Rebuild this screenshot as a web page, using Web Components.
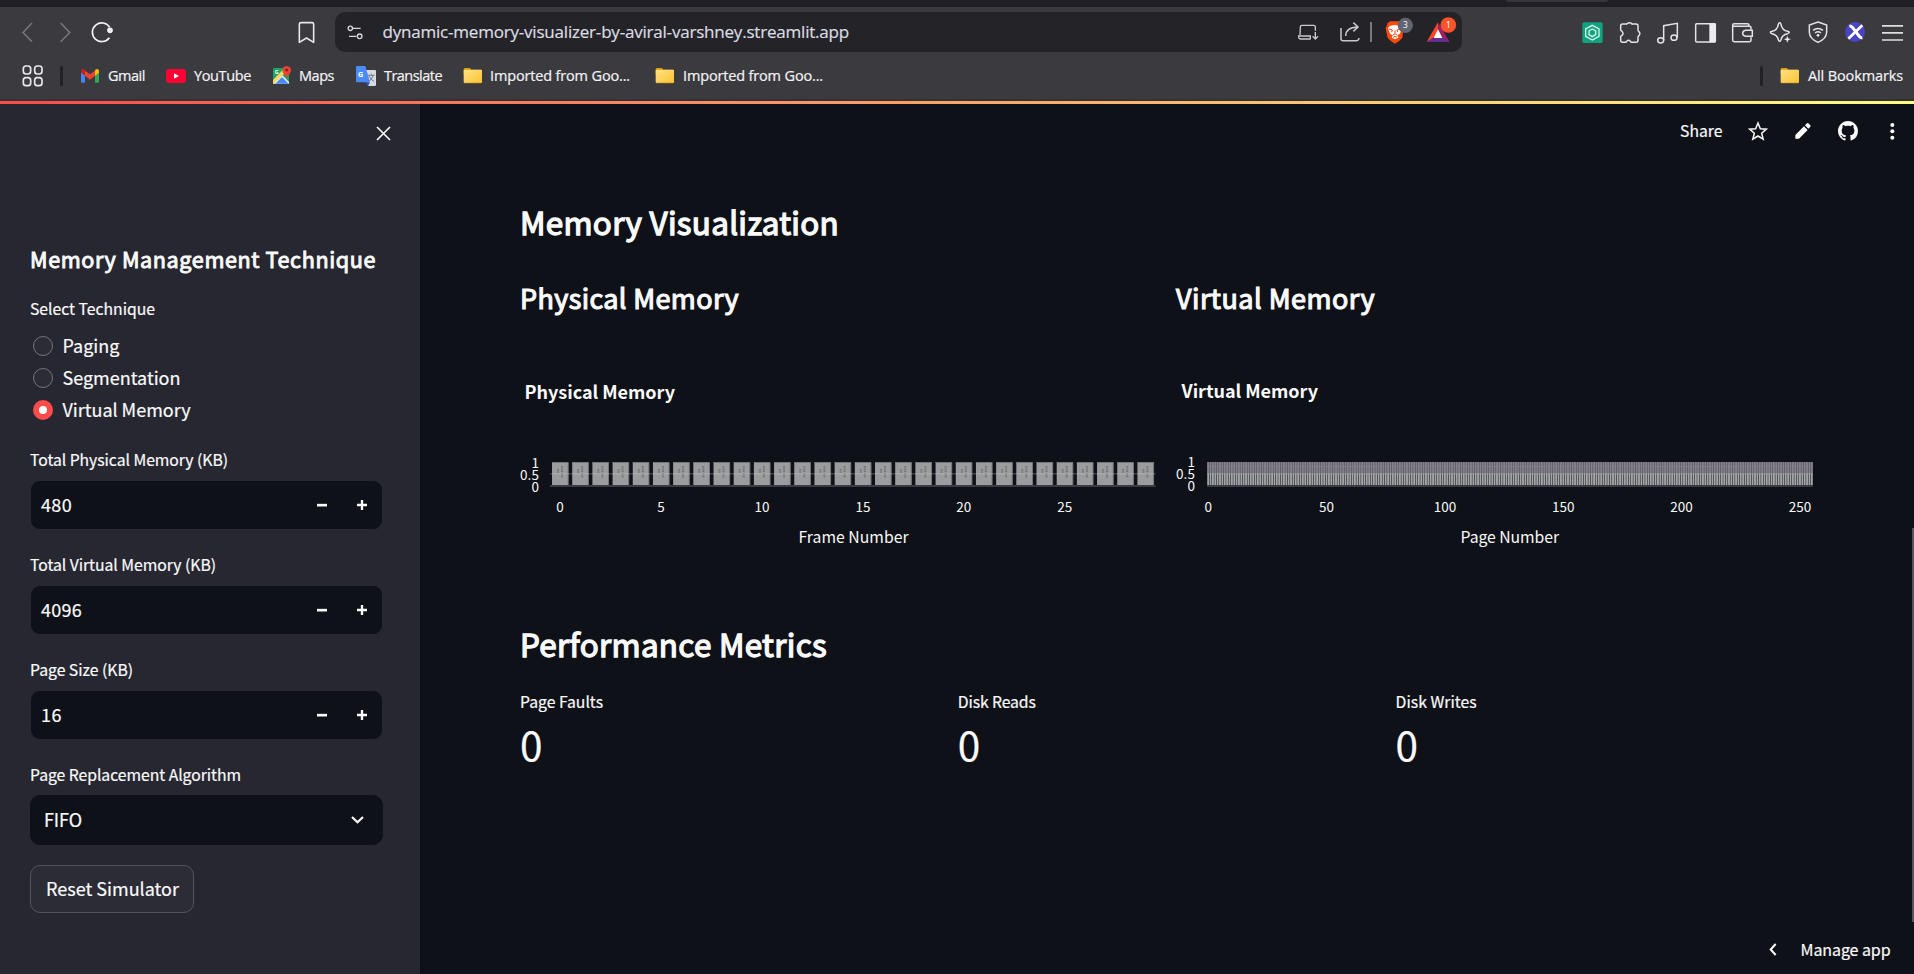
<!DOCTYPE html>
<html lang="en">
<head>
<meta charset="utf-8">
<title>Memory Visualizer</title>
<style>
html,body{margin:0;height:100%;background:#0e1117;overflow:hidden}
body{font-family:"Noto Sans CJK SC","Noto Sans",sans-serif;color:#fafafa;-webkit-text-stroke:.2px currentColor}
</style>
</head>
<body>
<memory-app></memory-app>
<script>
const ICONS = {
  back:['60 48 45 96','<path d="M96 69 69 97.500 96 125" fill="none" stroke="#79787d" stroke-width="4.500"/>'],
  fwd:['174 48 45 96','<path d="M182 69 209 97.500 182 125" fill="none" stroke="#79787d" stroke-width="4.500"/>'],
  reload:['270 48 75 96','<path d="M329 82A28 28 0 1 0 328 113" fill="none" stroke="#f2f2f4" stroke-width="5"/><circle cx="330" cy="91" r="8.500" fill="#f2f2f4"/>'],
  mark:['888 48 63 96','<path d="M898 73q0-5 5-5h33q5 0 5 5v54l-21.500-13L898 127z" fill="none" stroke="#e8e8ea" stroke-width="4.800" stroke-linejoin="round"/>'],
  tune:['1038 48 57 96','<g fill="none" stroke="#d6d6da" stroke-width="4"><circle cx="1051" cy="85" r="6.500"/><path d="M1059 85h23M1047 109h22"/><circle cx="1079" cy="109" r="7"/></g>'],
  dl:['108 48 72 96','<g fill="none" stroke="#c9c9cd" stroke-width="4"><path d="M166 92V81q0-5-5-5h-35q-5 0-5 5l-1 24M152 117h-31q-5 0-5-5v-4h35v9M166 96v20M158 109l8 8 8-8"/></g>'],
  share:['234 48 69 96','<g fill="none" stroke="#c9c9cd" stroke-width="4.500"><path d="M243 84v32q0 6 6 6h41q6 0 7-8M257 108q1-26 36-27M280 68l14 13-14 13"/></g>'],
  brave:['369 48 93 96','<path d="M390 64h28l12 10-2 36q-2 8-23 21-21-13-23-21l-5-25 6-15z" fill="#fb4a0c"/><path d="m391 77 14-2 14 2 6 7-5 17-8 5 3 7-10 5-10-5 3-7-8-5-6-17z" fill="#fff"/><path d="M387 87l10 3-2 6M421 87l-10 3 2 6M405 91v10l-7 5M405 101l7 5M399 112l6-3 6 3" fill="none" stroke="#fb4a0c" stroke-width="3"/><circle cx="436" cy="76" r="23" fill="#62646f"/><text x="436" y="85" font-size="25" text-anchor="middle" fill="#f4f4f4" font-family="Noto Sans">3</text>'],
  bat:['495 48 96 96','<path d="M534 67 500 126l35-21z" fill="#ff4724"/><path d="M534 67 569 126l-34-21z" fill="#9e1f63"/><path d="M500 126h69l-34-24z" fill="#662d91"/><path d="M534 88 521 114h26z" fill="#fff"/><circle cx="565" cy="75" r="23.500" fill="#fb542b"/><text x="565" y="84" font-size="25" text-anchor="middle" fill="#fff" font-family="Noto Sans">1</text>'],
  green:['33 48 69 96','<rect x="37" y="67" width="61" height="62" rx="5" fill="#10a37f"/><g fill="none" stroke="#d9f3ea" stroke-width="4"><path d="m67 76 20 11v22L67 120 47 109V87z"/><path d="m67 87 10 6v11l-10 6-10-6V93z"/></g>'],
  puzzle:['144 48 72 96','<path d="M152 78q0-6 6-6h11q1 1 2-1 8-5 14 0 1 2 2 1h11q6 0 6 6v12q0 3 2 4 7 6 0 14-2 1-2 4v9q0 6-6 6h-13q-3 0-4-3-5-6-11 0-1 3-4 3h-8q-6 0-6-6v-10q0-3 3-4 8-6 0-14-3-1-3-4z" fill="none" stroke="#e3e3e5" stroke-width="4.500"/>'],
  music:['255 48 75 96','<g fill="none" stroke="#e3e3e5" stroke-width="4.500"><ellipse cx="272" cy="121" rx="9" ry="8"/><ellipse cx="312" cy="113" rx="9" ry="8"/><path d="M281 121V77l41-7v43"/></g>'],
  panel:['372 48 69 96','<rect x="377" y="71" width="59" height="55" rx="3" fill="none" stroke="#e3e3e5" stroke-width="4.500"/><path d="M418 70h19v57h-19z" fill="#ececee"/>'],
  wallet:['483 48 69 96','<g fill="none" stroke="#e3e3e5" stroke-width="4.500"><path d="M543 89v-6q0-4-4-4h-51v41q0 5 5 5h46q4 0 4-4v-9M488 79v-3q0-5 5-5h39q5 0 5 5v2"/><path d="M547 91h-20q-9 1-9 9t9 9h20z"/></g>'],
  spark:['597 48 69 96','<path d="M629 68q3 0 4 5 3 18 20 21 5 1 5 3t-5 4q-17 3-20 18-1 5-4 5t-4-5q-3-15-19-18-5-1-5-4t5-3q16-3 19-21 1-5 4-5z" fill="none" stroke="#e3e3e5" stroke-width="4.500"/><path d="m652 106 3 9 9 3-9 3-3 9-3-9-9-3 9-3z" fill="#f2f2f2" stroke="#3b3a3f" stroke-width="1"/>'],
  shield:['711 48 66 96','<g fill="none" stroke="#e3e3e5" stroke-width="4.500"><path d="m744 66 26 9v22q-1 20-26 30-25-10-26-30V75z"/><path d="M729 91q15-11 30 0M735 99q9-7 18 0"/></g><circle cx="744" cy="106" r="4" fill="#eee"/>'],
  xball:['822 48 66 96','<circle cx="855" cy="96" r="30" fill="#4a43c4"/><path d="M838 78q6 0 10 5l19 25q5 6 10 5" fill="none" stroke="#fff" stroke-width="9"/><path d="M877 76 835 116" fill="none" stroke="#fff" stroke-width="8"/>'],
  menu:['933 48 69 96','<path d="M936 77.500h63M936 98.500h63M936 120h63" stroke="#dededf" stroke-width="5"/>'],
  apps:['63 192 69 72','<g fill="none" stroke="#e8e8ea" stroke-width="5"><rect x="70" y="198" width="22" height="24" rx="8"/><rect x="104" y="198" width="22" height="24" rx="8"/><rect x="70" y="233" width="22" height="24" rx="8"/><rect x="104" y="233" width="22" height="24" rx="8"/></g>'],
  gmail:['237 192 66 72','<path d="M243 216v28q0 4 4 4h8v-26z" fill="#4285f4"/><path d="M297 216v28q0 4-4 4h-8v-26z" fill="#34a853"/><path d="m255 212 15 11 15-11v15l-15 12-15-12z" fill="#ea4335"/><path d="M243 214q0-7 6-7 3 0 6 4v16l-12-9z" fill="#c5221f"/><path d="M297 214q0-7-6-7-3 0-6 4v16l12-9z" fill="#fbbc04"/>'],
  yt:['495 192 66 72','<rect x="498" y="207" width="60" height="42" rx="9" fill="#ff0033"/><path d="m522 220 15 8-15 8z" fill="#fff"/>'],
  maps:['813 192 63 72','<rect x="819" y="204" width="48" height="47" rx="4" fill="#1fa463"/><path d="M820 250 846 224 867 246v5h-46z" fill="#e9eef2"/><path d="M826 251l20-20 20 20z" fill="#4a89f3"/><path d="M819 240l28-29 8 8-34 32h-2z" fill="#fdd663"/><path d="M860 198q13 1 13 13 0 9-8 15-4 4-5 11-1-7-5-11-8-6-8-15 0-12 13-13z" fill="#e94335"/><circle cx="860" cy="210" r="4.500" fill="#8c1d18"/><text x="824" y="222" font-size="16" fill="#fff" font-family="Noto Sans" font-weight="700">G</text>'],
  trans:['1065 192 66 72','<path d="M1092 210h33q3 0 3 3v42q0 3-3 3h-20z" fill="#d6dadf"/><path d="M1071 198h25l14 49h-39q-3 0-3-3v-43q0-3 3-3z" fill="#4a8af4"/><path d="M1097 247h13l-6 11z" fill="#2a56c6"/><text x="1074" y="230" font-size="22" font-weight="700" fill="#fff" font-family="Noto Sans">G</text><path d="M1104 226h20M1114 221v5M1119 227q-3 12-13 17M1108 229q4 11 14 15" fill="none" stroke="#737b85" stroke-width="3"/>'],
  folder:['66 192 63 72','<defs><linearGradient id="g" x2="1" y2="1"><stop stop-color="#ffe182"/><stop offset="1" stop-color="#fcc433"/></linearGradient></defs><path d="M71 208q0-4 4-4h15l4 5h28q4 0 4 4v8H71z" fill="#d99a0b"/><rect x="71" y="209" width="55" height="40" rx="3" fill="url(#g)"/><path d="M72 248.500h53" stroke="#d9a320" stroke-width="2"/>'],
  star:['534 360 60 69','<path d="m564 369 7 17 18 1.500-14 12 4.500 18L564 408l-15.500 9.500L553 399.500l-14-12 18-1.500z" fill="none" stroke="#fafafa" stroke-width="4.500"/>'],
  pencil:['669 360 60 69','<path d="M676 405v11h11l26-26-11-11zM705 376l6-6q2-2 4 0l6 6q2 2 0 4l-6 6z" fill="#fafafa"/>'],
  github:['0 0 16 16','<path fill="#fafafa" d="M8 0C3.580 0 0 3.580 0 8c0 3.540 2.290 6.530 5.470 7.590.4.070.55-.17.55-.38 0-.19-.01-.82-.01-1.490-2.010.37-2.530-.49-2.690-.94-.09-.23-.48-.94-.82-1.130-.28-.15-.68-.52-.01-.53.63-.01 1.080.58 1.230.82.72 1.210 1.870.87 2.330.66.07-.52.28-.87.51-1.070-1.780-.2-3.640-.89-3.640-3.950 0-.87.31-1.590.82-2.150-.08-.2-.36-1.020.08-2.120 0 0 .67-.21 2.200.82.64-.18 1.320-.27 2-.27s1.360.09 2 .27c1.530-1.040 2.200-.82 2.200-.82.44 1.100.16 1.920.08 2.120.51.56.82 1.270.82 2.150 0 3.070-1.870 3.750-3.650 3.950.29.25.54.73.54 1.480 0 1.070-.01 1.930-.01 2.200 0 .21.15.46.55.38A8.010 8.010 0 0 0 16 8c0-4.420-3.580-8-8-8z"/>',20],
  dots:['954 360 27 69','<g fill="#fafafa"><circle cx="967" cy="375" r="6"/><circle cx="967" cy="394" r="6"/><circle cx="967" cy="413" r="6"/></g>'],
  close:['0 0 45 45','<path d="M3 3 42 42M42 3 3 42" stroke="#fafafa" stroke-width="5"/>'],
  minus:['0 0 30 30','<path d="M0 15.500h30" stroke="#fafafa" stroke-width="8"/>'],
  plus:['0 0 30 30','<path d="M0 15h30M15 0v30" stroke="#fafafa" stroke-width="7"/>'],
  down:['0 0 39 24','<path d="m3 3 16.500 16L36 3" fill="none" stroke="#fafafa" stroke-width="6.500"/>'],
  left:['0 0 24 39','<path d="M20 3 5 19.500 20 36" fill="none" stroke="#fafafa" stroke-width="6"/>'],
};
const def=(name,render)=>customElements.define(name,class extends HTMLElement{
  connectedCallback(){
    if(this.shadowRoot) return;
    this.attachShadow({mode:'open'});
    render.call(this,this.shadowRoot,n=>this.getAttribute(n));
  }
});

def('ui-icon',(r,a)=>{
  const [vb,body,size]=ICONS[a('name')], p=vb.split(' ');
  const w=size||p[2]/3, h=size||p[3]/3;
  r.innerHTML=`<style>:host{display:block;flex:none;width:${w}px;height:${h}px}svg{display:block}</style><svg width="${w}" height="${h}" viewBox="${vb}">${body}</svg>`;
});

/* One line of text whose tracking adapts so that it fills the width "w". */
def('fit-text',function(r,a){
  r.innerHTML=`<style>:host{display:block;flex:none;white-space:nowrap;width:${a('w')}px}span{display:inline-block}</style><span><slot></slot></span>`;
  const s=r.querySelector('span'), n=this.textContent.length;
  s.style.letterSpacing='0';
  s.style.letterSpacing=(a('w')-1-s.getBoundingClientRect().width)/n+'px';
});

def('browser-toolbar',r=>{
  r.innerHTML=`<style>
  :host{display:flex;flex-direction:column;height:101px;background:#3b3a3f;font-family:"Open Sans","Noto Sans",sans-serif;color:#f3f3f5}
  .tabs{height:7px;background:#201f25;flex:none;display:flex}
  .tab{margin-left:1506px;width:102px;height:2px;background:#36353b;border-radius:0 0 6px 6px}
  .nav{height:50px;display:flex;align-items:center;padding-left:20px;flex:none}
  .addr{display:flex;align-items:center;width:1116px;height:40px;padding-left:11px;margin-left:18px;background:#242328;border-radius:10px}
  .url{margin-left:17.500px;font-size:17px;line-height:24px;color:#dcdce2;margin-top:-1px}
  .div{width:2px;height:20px;background:#77777c;margin-left:9px}
  .marks{height:38px;display:flex;align-items:center;padding-left:21px;flex:none;font-size:14.500px;line-height:20px}
  .marks ui-icon+fit-text{margin-left:7px}
  .sep{width:3px;height:20px;border-radius:2px;background:#222127;flex:none}
  .edge{margin-top:auto;height:2px;background:#333238}
  </style>
  <div class="tabs"><div class="tab"></div></div>
  <div class="nav">
    <ui-icon name="back"></ui-icon><ui-icon name="fwd" style="margin-left:23px"></ui-icon><ui-icon name="reload" style="margin-left:17px"></ui-icon><ui-icon name="mark" style="margin-left:181px"></ui-icon>
    <div class="addr"><ui-icon name="tune"></ui-icon><fit-text class="url" w="467.500">dynamic-memory-visualizer-by-aviral-varshney.streamlit.app</fit-text>
      <ui-icon name="dl" style="margin-left:446px"></ui-icon><ui-icon name="share" style="margin-left:18px"></ui-icon><div class="div"></div><ui-icon name="brave" style="margin-left:11px"></ui-icon><ui-icon name="bat" style="margin-left:11px"></ui-icon></div>
    <ui-icon name="green" style="margin-left:119px"></ui-icon><ui-icon name="puzzle" style="margin-left:14px"></ui-icon><ui-icon name="music" style="margin-left:13px"></ui-icon><ui-icon name="panel" style="margin-left:14px"></ui-icon><ui-icon name="wallet" style="margin-left:14px"></ui-icon><ui-icon name="spark" style="margin-left:15px"></ui-icon><ui-icon name="shield" style="margin-left:15px"></ui-icon><ui-icon name="xball" style="margin-left:15px"></ui-icon><ui-icon name="menu" style="margin-left:15px"></ui-icon>
  </div>
  <div class="marks">
    <ui-icon name="apps"></ui-icon><div class="sep" style="margin-left:16px"></div>
    <ui-icon name="gmail" style="margin-left:16px"></ui-icon><fit-text w="38">Gmail</fit-text>
    <ui-icon name="yt" style="margin-left:19px"></ui-icon><fit-text w="58">YouTube</fit-text>
    <ui-icon name="maps" style="margin-left:19px"></ui-icon><fit-text w="36">Maps</fit-text>
    <ui-icon name="trans" style="margin-left:20px"></ui-icon><fit-text w="59">Translate</fit-text>
    <ui-icon name="folder" style="margin-left:19px"></ui-icon><fit-text w="141">Imported from Goo...</fit-text>
    <ui-icon name="folder" style="margin-left:23px"></ui-icon><fit-text w="141" style="margin-left:8px">Imported from Goo...</fit-text>
    <div class="sep" style="margin-left:936px"></div>
    <ui-icon name="folder" style="margin-left:16px"></ui-icon><fit-text w="96" style="margin-left:8px">All Bookmarks</fit-text>
  </div>
  <div class="edge"></div>`;
});

def('field-box',(r,a)=>{
  r.innerHTML=`<style>:host{display:block;height:80px;margin-bottom:25px}
  .l{height:30px;font-size:15.750px;line-height:20px}
  .b{box-sizing:border-box;height:50px;width:353px;border:1px solid #262730;border-radius:10px;background:#0e1117;display:flex;align-items:center;padding:0 15px 0 10px;font-size:18px;line-height:24px}
  .b.sel{border-color:#0e1117;padding:0 18px 0 13px}
  .b fit-text{margin-top:-2px}
  .g{flex:1}ui-icon[name=plus]{margin-left:30px}</style>
  <div class="l"><fit-text w="${a('lw')}">${a('label')}</fit-text></div>
  <div class="b ${a('kind')||''}"><fit-text w="${a('vw')}">${a('value')}</fit-text><div class="g"></div>${a('kind')?'<ui-icon name="down"></ui-icon>':'<ui-icon name="minus"></ui-icon><ui-icon name="plus"></ui-icon>'}</div>`;
});

def('radio-row',(r,a)=>{
  const on=a('on')!==null;
  r.innerHTML=`<style>:host{display:flex;align-items:center;height:32px;padding-left:3px;font-size:18px;line-height:24px}
  i{box-sizing:border-box;width:20px;height:20px;border-radius:50%;margin-right:9.500px;display:block;${on?'border:6.500px solid #ff4b4b;background:#fff':'border:1.500px solid #74757c;background:#2b2c36'}}
  fit-text{margin-top:-3px}</style><i></i><fit-text w="${a('w')}">${a('label')}</fit-text>`;
});

def('side-bar',r=>{
  r.innerHTML=`<style>:host{box-sizing:border-box;display:flex;flex-direction:column;width:420px;height:100%;background:#262730;padding:22px 0 0 30px}
  .x{margin-left:346px;height:15px}
  .h{margin-top:104px;font-size:21.600px;line-height:28px;-webkit-text-stroke:.042em #fafafa}
  .s{margin-top:26px;font-size:15.750px;line-height:20px}
  .rad{margin:11px 0 24px}
  .btn{box-sizing:border-box;margin-top:-5px;width:164px;height:48px;border:1px solid #52535b;border-radius:10px;background:#2b2c36;padding:10px 0 0 15px;font-size:18px;line-height:24px}</style>
  <div class="x"><ui-icon name="close"></ui-icon></div>
  <fit-text class="h" w="347">Memory Management Technique</fit-text>
  <fit-text class="s" w="126">Select Technique</fit-text>
  <div class="rad"><radio-row label="Paging" w="58"></radio-row><radio-row label="Segmentation" w="119"></radio-row><radio-row on label="Virtual Memory" w="129"></radio-row></div>
  <field-box label="Total Physical Memory (KB)" lw="199" value="480" vw="32"></field-box>
  <field-box label="Total Virtual Memory (KB)" lw="187" value="4096" vw="42"></field-box>
  <field-box label="Page Size (KB)" lw="104" value="16" vw="22"></field-box>
  <field-box kind="sel" label="Page Replacement Algorithm" lw="212" value="FIFO" vw="39"></field-box>
  <div class="btn"><fit-text w="134">Reset Simulator</fit-text></div>`;
});

/* Bar chart of a memory: one bar of height 1 per frame or page. */
def('memory-chart',(r,a)=>{
  const n=+a('count'), x0=+a('x0'), x1=+a('x1'), step=+a('step'), p=(x1-x0)/n, dy=+a('dy');
  let s='';
  const many=n>100;
  for(let i=0;i<n;i++){
    const x=x0+i*p+p*.1, w=p*.8;
    if(many) s+=`<rect x="${x.toFixed(2)}" y="92" width="${w.toFixed(2)}" height="24" fill="#a4a5a7"/>`;
    else s+=`<rect x="${x.toFixed(2)}" y="92" width="${w.toFixed(2)}" height="24" fill="#9b9c9d"/><path d="M${x.toFixed(2)} 92.500h${w.toFixed(2)}v23" fill="none" stroke="#77787b"/><path d="M${(x+6).toFixed(1)} 99v4m4-7v12" stroke="#74757a" stroke-width="2" stroke-dasharray="1.500 .8"/>`;
  }
  if(many) s+=`<rect x="${x0}" y="92" width="${x1-x0}" height="12" fill="#6e6876" opacity=".6"/><path d="M${x0} 96.500h${x1-x0}" stroke="#a5a2ab" opacity=".4" stroke-dasharray="1 1.400"/>`;
  let t='';
  for(let v=0;v<n;v+=step){t+=`<text x="${(x0+(v+.5)*p).toFixed(1)}" y="142" text-anchor="middle" font-size="13.500">${v}</text>`}
  r.innerHTML=`<style>:host{display:block;width:650px;height:190px}svg{display:block;fill:#fafafa}</style>
  <svg width="650" height="190" font-family="Noto Sans CJK SC, sans-serif">
  <text x="${a('tx')}" y="${29+dy}" font-size="18" font-weight="700" textLength="${a('tw')}">${a('label')}</text>
  ${s}<path d="M${x0} 103.800h${x1-x0}" stroke="#d0d0d8" stroke-width="1.500" opacity=".25"/><path d="M${x0} 116h${x1-x0}" stroke="#3a3b44" stroke-width="2"/>
  <g font-size="13.500" text-anchor="end"><text x="19" y="${98+dy}">1</text><text x="19" y="${109.500+dy}" textLength="19">0.5</text><text x="19" y="${121.500+dy}">0</text></g>
  ${t}<text x="${a('ax')}" y="173" font-size="15.750" textLength="${a('aw')}">${a('axis')}</text></svg>`;
});

def('metric-box',(r,a)=>{
  r.innerHTML=`<style>:host{display:block;width:437.800px}.l{font-size:15.750px;line-height:20px}.v{font-size:40.500px;line-height:50px;margin-top:7px}</style>
  <fit-text class="l" w="${a('w')}">${a('label')}</fit-text><fit-text class="v" w="23">${a('value')}</fit-text>`;
});

def('main-view',r=>{
  r.innerHTML=`<style>:host{display:flex;flex-direction:column;width:1494px;height:100%;background:#0e1117}
  .top{height:54px;display:flex;align-items:center;padding-left:1260px;flex:none;font-size:15.750px;line-height:20px}
  .body{padding-left:100px;flex:none}
  .h2,.h3{-webkit-text-stroke:.042em #fafafa}
  .h2{font-size:31.400px;line-height:44px}
  .h3{font-size:27px;line-height:36px}
  .cols{display:flex}.col{width:656px;flex:none}
  .foot{margin:auto 0 13px 1349px;display:flex;align-items:center;font-size:16px;line-height:24px}
  .bar{position:absolute;right:0;top:528px;width:2px;height:394px;background:#55565c}</style>
  <div class="top"><fit-text w="43.500">Share</fit-text><ui-icon name="star" style="margin-left:24.500px"></ui-icon><ui-icon name="pencil" style="margin-left:25px"></ui-icon><ui-icon name="github" style="margin-left:25px"></ui-icon><ui-icon name="dots" style="margin-left:30px"></ui-icon></div>
  <div class="body">
   <fit-text class="h2" w="320" style="margin-top:42px">Memory Visualization</fit-text>
   <div class="cols" style="margin-top:36px">
    <div class="col"><fit-text class="h3" w="220">Physical Memory</fit-text><memory-chart style="margin-top:54px" label="Physical Memory" tx="4.5" tw="150.5" axis="Frame Number" ax="278.5" aw="110" count="30" step="5" x0="30" x1="635.600" dy="0"></memory-chart></div>
    <div class="col"><fit-text class="h3" w="200">Virtual Memory</fit-text><memory-chart style="margin-top:54px" label="Virtual Memory" tx="5.5" tw="136.5" axis="Page Number" ax="284.5" aw="98.500" count="256" step="50" x0="31" x1="637" dy="-1"></memory-chart></div>
   </div>
   <fit-text class="h2" w="308" style="margin-top:62px">Performance Metrics</fit-text>
   <div class="cols" style="margin-top:26px"><metric-box label="Page Faults" w="84" value="0"></metric-box><metric-box label="Disk Reads" w="79" value="0"></metric-box><metric-box label="Disk Writes" w="82" value="0"></metric-box></div>
  </div>
  <div class="foot"><ui-icon name="left"></ui-icon><fit-text w="91" style="margin-left:23.500px">Manage app</fit-text></div>
  <div class="bar"></div>`;
});

def('memory-app',r=>{
  r.innerHTML=`<style>:host{display:flex;flex-direction:column;width:1914px;height:974px;overflow:hidden;position:relative}
  .line{height:3px;flex:none;background:linear-gradient(90deg,#ff4b4b,#fffd80)}
  .page{display:flex;flex:1;min-height:0}</style>
  <browser-toolbar style="flex:none"></browser-toolbar><div class="line"></div>
  <div class="page"><side-bar></side-bar><main-view></main-view></div>`;
});
</script>
</body>
</html>
